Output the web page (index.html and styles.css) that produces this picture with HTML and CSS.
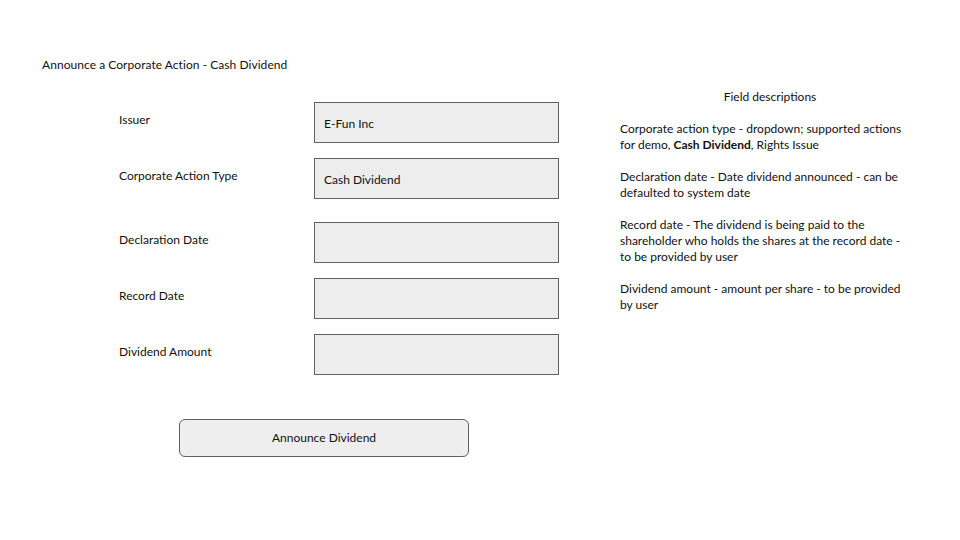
FILE: index.html
```html
<!DOCTYPE html>
<html>
<head>
<meta charset="utf-8">
<link rel="stylesheet" href="styles.css">
</head>
<body>
<div class="page">
  <div class="title">Announce a Corporate Action - Cash Dividend</div>
  <div class="main">
    <div class="form">
      <div class="row">
        <div class="label">Issuer</div>
        <div class="box">E-Fun Inc</div>
      </div>
      <div class="row row-wide">
        <div class="label">Corporate Action Type</div>
        <div class="box">Cash Dividend</div>
      </div>
      <div class="row">
        <div class="label">Declaration Date</div>
        <div class="box"></div>
      </div>
      <div class="row">
        <div class="label">Record Date</div>
        <div class="box"></div>
      </div>
      <div class="row">
        <div class="label">Dividend Amount</div>
        <div class="box"></div>
      </div>
      <div class="button">Announce Dividend</div>
    </div>
    <div class="desc">
      <div class="desc-title">Field descriptions</div>
      <p>Corporate action type - dropdown; supported actions<br>for demo, <b>Cash Dividend</b>, Rights Issue</p>
      <p>Declaration date - Date dividend announced - can be<br>defaulted to system date</p>
      <p>Record date - The dividend is being paid to the<br>shareholder who holds the shares at the record date -<br>to be provided by user</p>
      <p>Dividend amount - amount per share - to be provided<br>by user</p>
    </div>
  </div>
</div>
</body>
</html>
```
FILE: styles.css
```css
html, body {
  margin: 0;
  padding: 0;
  background: #ffffff;
}
body {
  font-family: Lato, "Open Sans", sans-serif;
  font-size: 12px;
  line-height: 16px;
  color: #111111;
  width: 960px;
  height: 540px;
  overflow: hidden;
}
.page {
  padding: 57px 0 0 42px;
}
.title {
  height: 16px;
  letter-spacing: 0.05px;
}
.main {
  display: flex;
  align-items: flex-start;
  padding-left: 77px;
}
.form {
  width: 440px;
  margin-top: 29px;
}
.row {
  display: grid;
  grid-template-columns: 195px 245px;
  margin-bottom: 15px;
}
.row-wide {
  margin-bottom: 23px;
}
.label {
  padding-top: 10px;
}
.box {
  height: 41px;
  box-sizing: border-box;
  border: 1px solid #606060;
  background: #ededed;
  padding: 13px 0 0 9px;
}
.button {
  margin-top: 44px;
  margin-left: 60px;
  width: 290px;
  height: 38px;
  box-sizing: border-box;
  border: 1px solid #606060;
  border-radius: 6px;
  background: #eeeeee;
  display: flex;
  align-items: center;
  justify-content: center;
}
.desc {
  margin-top: 16px;
  margin-left: 61px;
  width: 300px;
  white-space: nowrap;
}
.desc-title {
  text-align: center;
  margin-bottom: 16px;
}
.desc p {
  margin: 0 0 16px 0;
}
.desc b {
  font-weight: 700;
}
```
